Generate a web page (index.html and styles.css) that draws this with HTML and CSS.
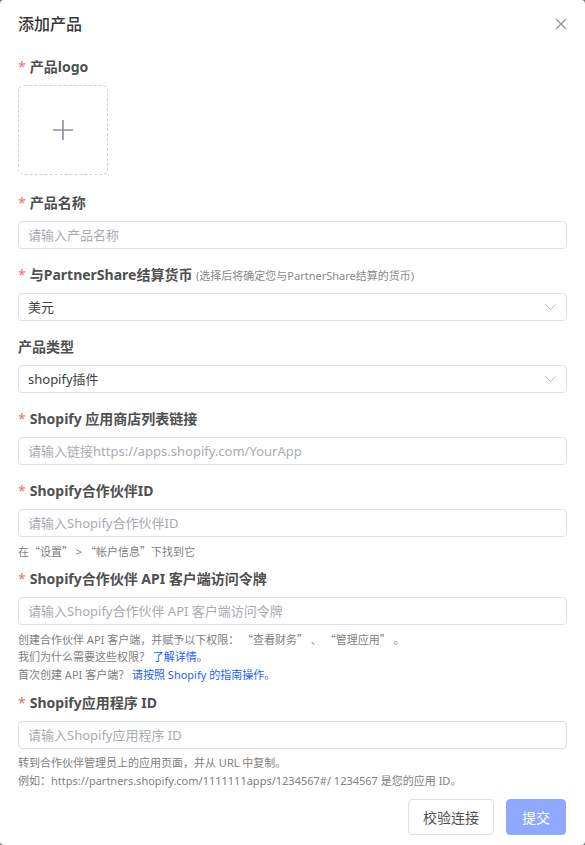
FILE: index.html
```html
<!DOCTYPE html>
<html lang="zh-CN">
<head>
    <meta charset="UTF-8">
    <meta name="viewport" content="width=device-width, initial-scale=1.0">
    <title>添加产品</title>
    <link rel="stylesheet" href="styles.css">
</head>
<body>
    <div class="dialog">
        <div class="dialog-header">
            <h2 class="dialog-title">添加产品</h2>
            <button class="dialog-close" type="button" aria-label="关闭">
                <svg width="12" height="12" viewBox="0 0 12 12"><path d="M1 1L11 11M11 1L1 11" stroke="#909399" stroke-width="1.2" fill="none"/></svg>
            </button>
        </div>

        <form class="form">
            <div class="form-item">
                <label class="form-label required">产品logo</label>
                <div class="upload-box">
                    <svg width="22" height="22" viewBox="0 0 22 22"><path d="M11 1V21M1 11H21" stroke="#8c939d" stroke-width="1.6" fill="none"/></svg>
                </div>
            </div>

            <div class="form-item">
                <label class="form-label required">产品名称</label>
                <input class="form-input" type="text" placeholder="请输入产品名称">
            </div>

            <div class="form-item">
                <label class="form-label required">与PartnerShare结算货币 <span class="label-tip">(选择后将确定您与PartnerShare结算的货币)</span></label>
                <div class="form-select">
                    <span>美元</span>
                    <svg class="select-arrow" width="11" height="6" viewBox="0 0 11 6"><path d="M0.5 0.5L5.5 5.5L10.5 0.5" stroke="#b8bcc4" stroke-width="1" fill="none"/></svg>
                </div>
            </div>

            <div class="form-item">
                <label class="form-label">产品类型</label>
                <div class="form-select">
                    <span>shopify插件</span>
                    <svg class="select-arrow" width="11" height="6" viewBox="0 0 11 6"><path d="M0.5 0.5L5.5 5.5L10.5 0.5" stroke="#b8bcc4" stroke-width="1" fill="none"/></svg>
                </div>
            </div>

            <div class="form-item">
                <label class="form-label required">Shopify 应用商店列表链接</label>
                <input class="form-input" type="text" placeholder="请输入链接https://apps.shopify.com/YourApp">
            </div>

            <div class="form-item has-help">
                <label class="form-label required">Shopify合作伙伴ID</label>
                <input class="form-input" type="text" placeholder="请输入Shopify合作伙伴ID">
                <div class="form-help">
                    <p>在<span class="cjk">“设置”</span> &gt; <span class="cjk">“帐户信息”</span>下找到它</p>
                </div>
            </div>

            <div class="form-item has-help">
                <label class="form-label required">Shopify合作伙伴 API 客户端访问令牌</label>
                <input class="form-input" type="text" placeholder="请输入Shopify合作伙伴 API 客户端访问令牌">
                <div class="form-help">
                    <p>创建合作伙伴 API 客户端，并赋予以下权限： <span class="cjk">“查看财务”</span> 、 <span class="cjk">“管理应用”</span> 。</p>
                    <p>我们为什么需要这些权限？ <a href="#">了解详情。</a></p>
                    <p>首次创建 API 客户端？ <a href="#">请按照 Shopify 的指南操作。</a></p>
                </div>
            </div>

            <div class="form-item has-help">
                <label class="form-label required">Shopify应用程序 ID</label>
                <input class="form-input" type="text" placeholder="请输入Shopify应用程序 ID">
                <div class="form-help">
                    <p>转到合作伙伴管理员上的应用页面，并从 URL 中复制。</p>
                    <p>例如：https://partners.shopify.com/1111111apps/1234567#/ 1234567 是您的应用 ID。</p>
                </div>
            </div>
        </form>

        <div class="dialog-footer">
            <button class="btn" type="button">校验连接</button>
            <button class="btn btn-primary" type="button" disabled>提交</button>
        </div>
    </div>
</body>
</html>
```

FILE: styles.css
```css
* {
    box-sizing: border-box;
}

body, html {
    margin: 0;
    padding: 0;
    background: #7a7a7a;
    font-family: "Noto Sans", "Noto Sans CJK SC", sans-serif;
    color: #303133;
}

.dialog {
    height: 845px;
    background: #fff;
    border-radius: 4px;
    padding: 12px 18px 10px;
    display: flex;
    flex-direction: column;
}

.dialog-header {
    display: flex;
    align-items: center;
    justify-content: space-between;
    height: 24px;
    margin-bottom: 21px;
}

.dialog-title {
    margin: 0;
    font-size: 16px;
    line-height: 24px;
    font-weight: 500;
    color: #383838;
}

.dialog-close {
    border: 0;
    background: none;
    padding: 0;
    width: 12px;
    height: 12px;
    display: flex;
    cursor: pointer;
}

.form {
    display: flex;
    flex-direction: column;
}

.form-item {
    display: flex;
    flex-direction: column;
    margin-bottom: 16px;
}

.form-item.has-help {
    margin-bottom: 9px;
}

.form-label {
    font-size: 14px;
    line-height: 20px;
    height: 20px;
    font-weight: 700;
    color: #505050;
    margin-bottom: 8px;
    white-space: nowrap;
}

.form-label.required::before {
    content: "*";
    color: #f56c6c;
    margin-right: 4px;
    font-weight: 400;
}

.label-tip {
    font-size: 11px;
    font-weight: 400;
    color: #8a8a8a;
}

.upload-box {
    width: 90px;
    height: 90px;
    border: 1px dashed #cdd0d6;
    border-radius: 6px;
    display: flex;
    align-items: center;
    justify-content: center;
    margin-bottom: 2px;
}

.form-input,
.form-select {
    width: 100%;
    height: 28px;
    border: 1px solid #dcdfe6;
    border-radius: 4px;
    padding: 0 9px;
    font-family: inherit;
    font-size: 13px;
    color: #404040;
    outline: none;
}

.form-input::placeholder {
    color: #a8abb2;
}

.form-select {
    display: flex;
    align-items: center;
    justify-content: space-between;
    line-height: 26px;
}

.select-arrow {
    margin-right: 1px;
}

.form-help {
    margin-top: 5px;
}

.form-help p {
    margin: 0;
    height: 18px;
    font-size: 11px;
    line-height: 18px;
    color: #808080;
    white-space: nowrap;
}

.form-help .cjk {
    font-family: "Noto Sans CJK SC", sans-serif;
}

.form-help a {
    color: #1f5eff;
    text-decoration: none;
}

.dialog-footer {
    margin-top: auto;
    display: flex;
    justify-content: flex-end;
    gap: 12px;
    padding-right: 1px;
}

.btn {
    height: 36px;
    padding: 0 14px;
    border: 1px solid #dcdfe6;
    border-radius: 4px;
    background: #fff;
    font-family: inherit;
    font-size: 14px;
    color: #505050;
    cursor: pointer;
}

.btn-primary {
    padding: 0 15px;
    background: #8ea9ff;
    border-color: #8ea9ff;
    color: #fff;
    cursor: not-allowed;
}
```
